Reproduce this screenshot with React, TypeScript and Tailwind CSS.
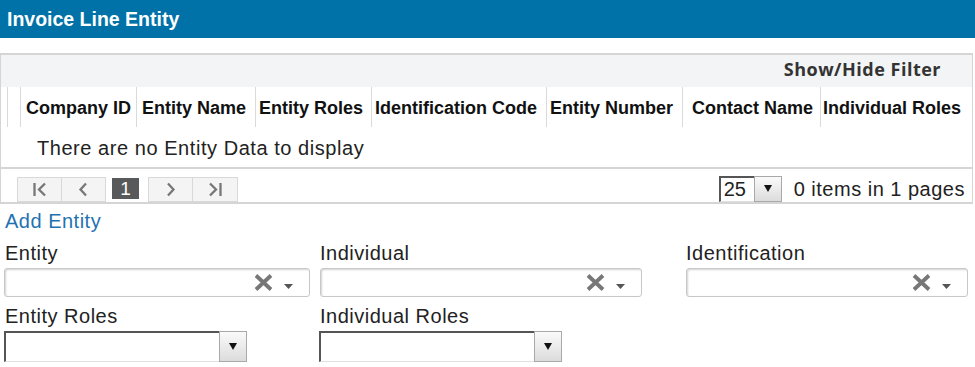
import React from "react";

const columns = [
  { label: "Company ID", w: "w-[116px]", pl: "pl-[5px]" },
  { label: "Entity Name", w: "w-[119px]", pl: "pl-[5px]" },
  { label: "Entity Roles", w: "w-[116px]", pl: "pl-[3px]" },
  { label: "Identification Code", w: "w-[175px]", pl: "pl-[3px]" },
  { label: "Entity Number", w: "w-[136px]", pl: "pl-[3px]" },
  { label: "Contact Name", w: "w-[138px]", pl: "pl-[9px]" },
  { label: "Individual Roles", w: "flex-1", pl: "pl-[2px]" },
];

function PagerIcon({ kind }: { kind: "first" | "prev" | "next" | "last" }) {
  return (
    <svg width="15" height="15" viewBox="0 0 15 15" fill="none" stroke="#777" strokeWidth="2.3">
      {kind === "first" && (
        <>
          <path d="M2.5 1v13" />
          <path d="M13 1.5L7 7.5l6 6" />
        </>
      )}
      {kind === "prev" && <path d="M10 1.5L4.5 7.5l5.5 6" />}
      {kind === "next" && <path d="M5 1.5l5.5 6-5.5 6" />}
      {kind === "last" && (
        <>
          <path d="M2 1.5l6 6-6 6" />
          <path d="M12.5 1v13" />
        </>
      )}
    </svg>
  );
}

function ComboBox({ width }: { width: string }) {
  return (
    <div
      className={`${width} h-[29px] rounded-[3px] border border-[#c8c8c8] bg-white shadow-[inset_1px_1px_2px_rgba(0,0,0,0.18)] flex items-center justify-end pr-[16px] gap-[11px]`}
    >
      <svg width="19" height="17" viewBox="0 0 19 17">
        <path d="M2 1.5L17 15.5M17 1.5L2 15.5" stroke="#777" strokeWidth="3.8" />
      </svg>
      <svg width="9" height="5" viewBox="0 0 9 5" className="mt-[8px]">
        <path d="M0 0h9L4.5 5z" fill="#555" />
      </svg>
    </div>
  );
}

function DropDown({ width, text, textSize }: { width: string; text?: string; textSize?: string }) {
  return (
    <div className={`${width} flex h-full`}>
      <div
        className={`flex-1 bg-white border-t-2 border-l-2 border-[#555] border-b border-b-[#e0e0e0] flex items-center pl-[3px] ${textSize ?? ""}`}
      >
        {text}
      </div>
      <div className="w-[28px] bg-gradient-to-b from-[#fafafa] to-[#dcdcdc] border border-[#a9a9a9] flex items-center justify-center">
        <svg width="8" height="7" viewBox="0 0 8 7">
          <path d="M0 0h8L4 7z" fill="#111" />
        </svg>
      </div>
    </div>
  );
}

export default function App() {
  return (
    <div className="w-[975px] h-[367px] bg-white overflow-hidden font-['Liberation_Sans',Arial,sans-serif] text-[#222]">
      <div className="h-[38px] bg-[#0072a8] text-white font-bold text-[19.5px] pl-[7px] pt-[2px] flex items-center">
        Invoice Line Entity
      </div>

      {/* Grid */}
      <div className="mt-[15px] w-[973px] border-x border-y-2 border-[#d5d5d5]">
        <div className="h-[32px] bg-[#f3f4f5] flex items-center justify-end pr-[31px] pb-[3px]">
          <span className="font-['Open_Sans',sans-serif] font-bold text-[18px] text-[#333] tracking-[0.5px]">
            Show/Hide Filter
          </span>
        </div>
        <div className="h-[40px] flex text-[18px] font-bold text-[#111]">
          <div className="w-[6px]" />
          <div className="w-[13px] border-l border-[#dadada]" />
          {columns.map((c) => (
            <div
              key={c.label}
              className={`${c.w} ${c.pl} pt-[3px] border-l border-[#dadada] flex items-center whitespace-nowrap overflow-hidden`}
            >
              {c.label}
            </div>
          ))}
        </div>
        <div className="h-[42px] border-b-2 border-[#d5d5d5] pl-[36px] pt-[2px] flex items-center text-[20px] tracking-[0.55px]">
          There are no Entity Data to display
        </div>
        <div className="h-[33px] flex items-end justify-between">
          <div className="flex items-end ml-[16px]">
            <div className="w-[45px] h-[25px] bg-[#f4f4f4] border border-[#d9d9d9] flex items-center justify-center">
              <PagerIcon kind="first" />
            </div>
            <div className="w-[44px] h-[25px] bg-[#f4f4f4] border border-l-0 border-[#d9d9d9] flex items-center justify-center">
              <PagerIcon kind="prev" />
            </div>
            <div className="ml-[6px] mb-[3px] w-[27px] h-[21px] bg-[#58595b] text-white text-[19px] leading-[21px] text-center">
              1
            </div>
            <div className="ml-[9px] w-[45px] h-[25px] bg-[#f4f4f4] border border-[#d9d9d9] flex items-center justify-center">
              <PagerIcon kind="next" />
            </div>
            <div className="w-[45px] h-[25px] bg-[#f4f4f4] border border-l-0 border-[#d9d9d9] flex items-center justify-center">
              <PagerIcon kind="last" />
            </div>
          </div>
          <div className="flex items-center self-center mt-[6px] pr-[7px]">
            <div className="h-[26px]">
              <DropDown width="w-[63px]" text="25" textSize="text-[20px]" />
            </div>
            <span className="ml-[12px] text-[20px] tracking-[0.5px]">0 items in 1 pages</span>
          </div>
        </div>
      </div>

      {/* Form */}
      <div className="pl-[5px] h-[34px] leading-[34px] text-[20px] tracking-[0.5px] text-[#1f72b0]">
        Add Entity
      </div>
      <div className="flex pl-[4px] text-[20px] tracking-[0.5px]">
        <div className="w-[306px]">
          <div className="pl-[1px] h-[30px] leading-[30px]">Entity</div>
          <ComboBox width="w-[306px]" />
          <div className="pl-[1px] mt-[4px] h-[30px] leading-[30px]">Entity Roles</div>
          <div className="h-[31px]">
            <DropDown width="w-[243px]" />
          </div>
        </div>
        <div className="ml-[10px] w-[322px]">
          <div className="h-[30px] leading-[30px]">Individual</div>
          <ComboBox width="w-[322px]" />
          <div className="mt-[4px] h-[30px] leading-[30px]">Individual Roles</div>
          <div className="h-[31px] -ml-[1px]">
            <DropDown width="w-[243px]" />
          </div>
        </div>
        <div className="ml-[44px] w-[282px]">
          <div className="h-[30px] leading-[30px]">Identification</div>
          <ComboBox width="w-[282px]" />
        </div>
      </div>
    </div>
  );
}
